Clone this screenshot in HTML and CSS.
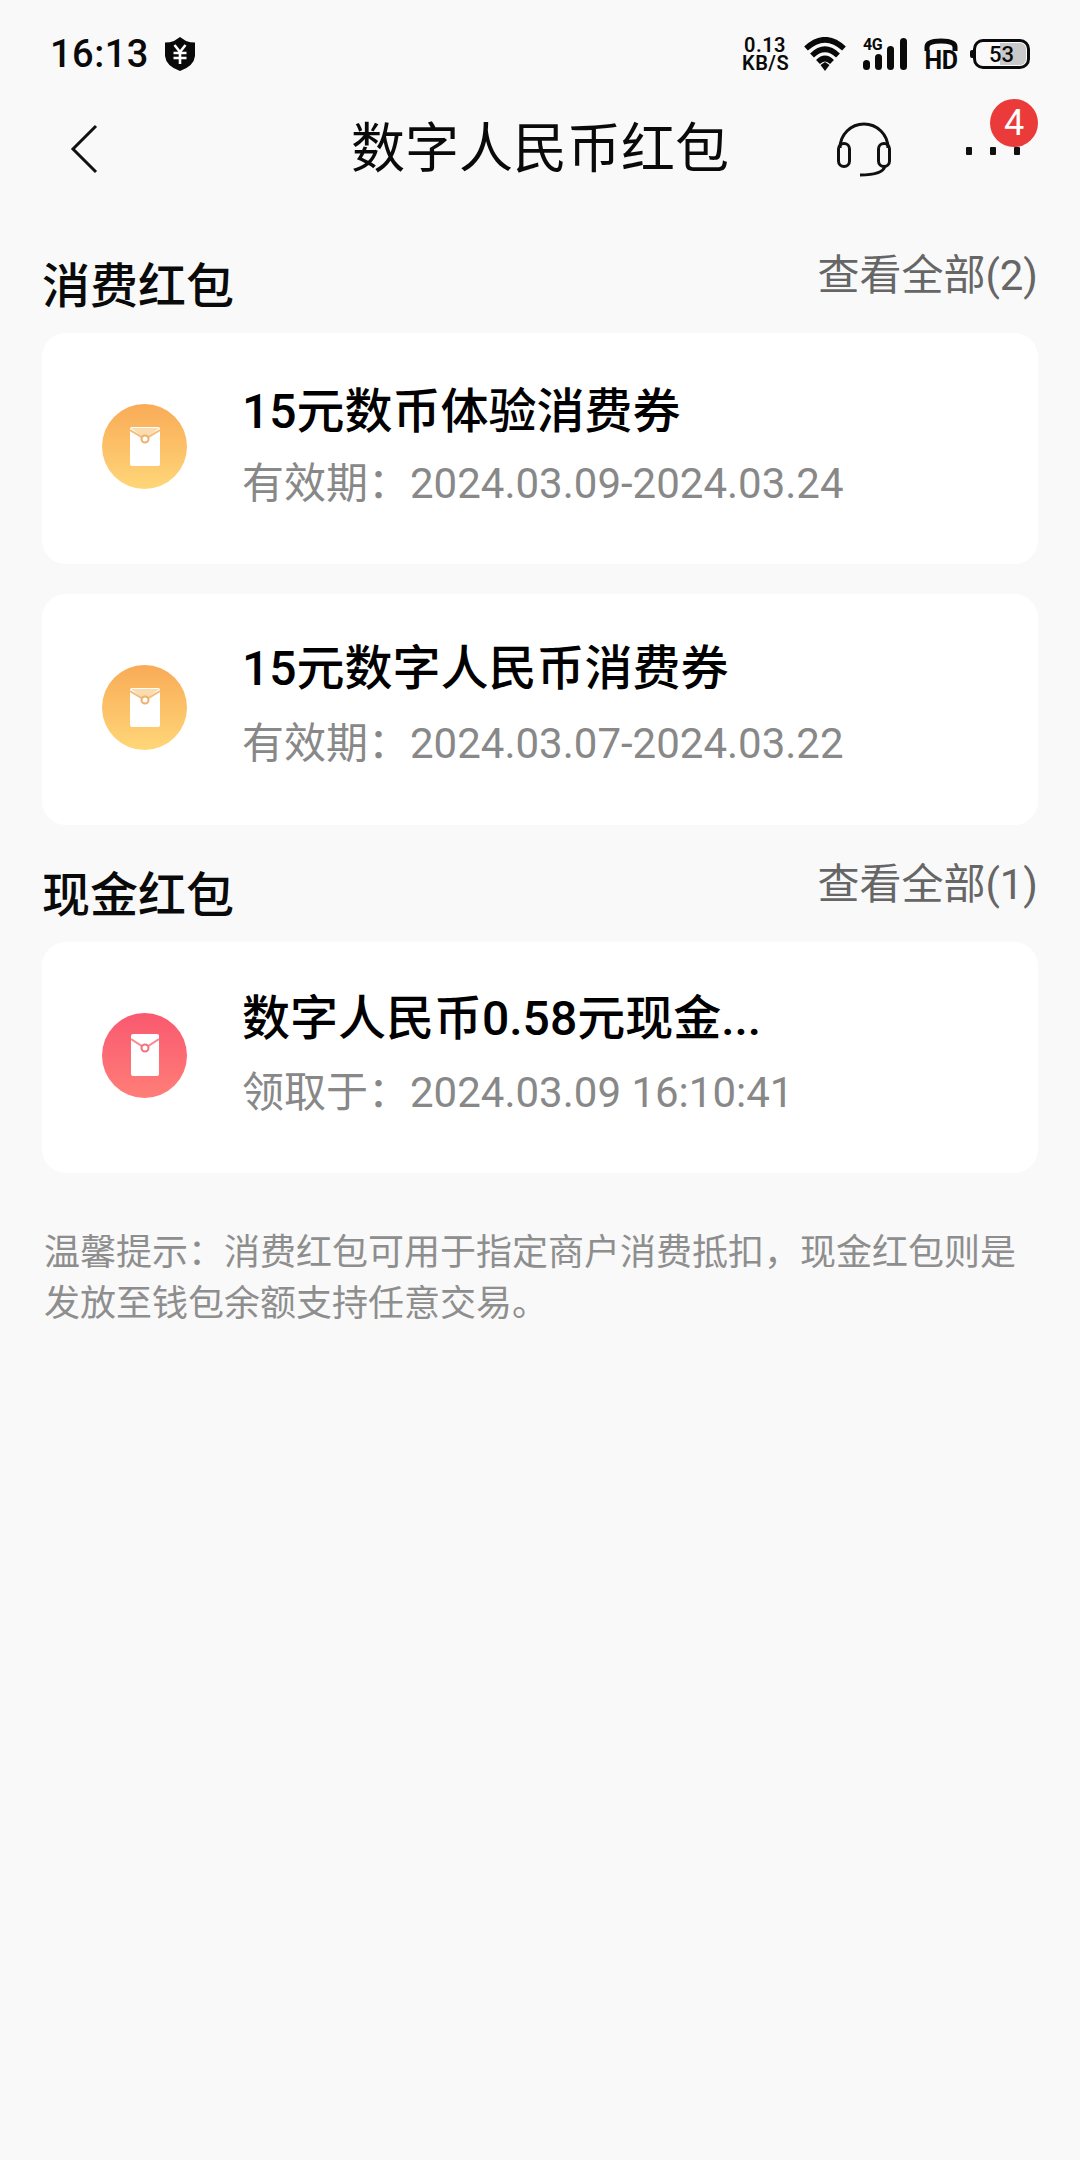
FILE: index.html
```html
<!DOCTYPE html>
<html lang="zh-CN">
<head>
<meta charset="utf-8">
<title>数字人民币红包</title>
<link rel="stylesheet" href="styles.css">
</head>
<body>
<div class="page">
  <div class="status">
    <div class="status-left">
      <span class="time">16:13</span>
      <svg class="shield" viewBox="0 0 30 34"><path d="M15 0 L21 4 Q25 5.500 30 5.500 V19 Q29 29 15 34 Q1 29 0 19 V5.500 Q5 5.500 9 4 Z" fill="#0a0a0a"/><path d="M9.500 8 L15 15 L20.500 8 M8.500 16 H21.500 M8.500 21 H21.500 M15 15 V27" stroke="#fff" stroke-width="2.600" fill="none"/></svg>
    </div>
    <div class="status-right">
      <div class="speed">0.13<br>KB/S</div>
      <svg class="wifi" viewBox="0 0 42 34"><path d="M2 11.500 Q21 -6 40 11.500 M8 18.500 Q21 6 34 18.500 M14 25 Q21 18 28 25" stroke="#0a0a0a" stroke-width="5.500" fill="none"/><path d="M16.500 28 L21 25 L25.500 28 L21 34 Z" fill="#0a0a0a"/></svg>
      <div class="signal">
        <span class="net">4G</span>
        <svg class="bars" viewBox="0 0 44 33"><rect x="0" y="22" width="7" height="10" rx="3.500"/><rect x="12" y="16" width="7" height="16" rx="3.500"/><rect x="24" y="8" width="7" height="24" rx="3.500"/><rect x="37" y="0" width="7" height="32" rx="3.500"/></svg>
      </div>
      <div class="hd">
        <svg class="phone" viewBox="0 0 34 13"><path d="M3 13 V9 Q3 3 17 3 Q31 3 31 9 V13" stroke="#0a0a0a" stroke-width="5" fill="none"/></svg>
        <span class="hd-text">HD</span>
      </div>
      <div class="battery"><span class="battery-fill"></span><span class="battery-num">53</span></div>
    </div>
  </div>

  <div class="nav">
    <svg class="back" viewBox="0 0 28 52"><path d="M26 3 L3 26 L26 49" stroke="#111" stroke-width="3" fill="none"/></svg>
    <h1 class="title">数字人民币红包</h1>
    <svg class="headset" viewBox="0 0 56 56"><g fill="none" stroke="#111" stroke-width="3"><path d="M4 27 A24 24 0 0 1 52 27"/><rect x="2.500" y="22.500" width="11" height="23" rx="5.500"/><rect x="42.500" y="22.500" width="11" height="23" rx="5.500"/><path d="M49 45 Q47 54 24 54"/></g></svg>
    <div class="more">
      <span class="dot"></span><span class="dot"></span><span class="dot"></span>
      <span class="badge">4</span>
    </div>
  </div>

  <section class="group">
    <div class="group-head"><h2>消费红包</h2><a class="all">查看全部(2)</a></div>
    <div class="card">
      <div class="coin coin-gold"><svg class="env" viewBox="0 0 30 39"><rect width="30" height="39" rx="2" fill="#fff"/><path d="M1 1 H29 L15 12 Z" fill="#fbdcae"/><path d="M0 3 L15 12 L30 3" stroke="#f3bd7e" stroke-width="2" fill="none"/><circle cx="15" cy="12" r="3.500" fill="#fff" stroke="#efb069" stroke-width="2"/></svg></div>
      <div class="info info-a"><div class="name">15元数币体验消费券</div><div class="meta">有效期：2024.03.09-2024.03.24</div></div>
    </div>
    <div class="card">
      <div class="coin coin-gold"><svg class="env" viewBox="0 0 30 39"><rect width="30" height="39" rx="2" fill="#fff"/><path d="M1 1 H29 L15 12 Z" fill="#fbdcae"/><path d="M0 3 L15 12 L30 3" stroke="#f3bd7e" stroke-width="2" fill="none"/><circle cx="15" cy="12" r="3.500" fill="#fff" stroke="#efb069" stroke-width="2"/></svg></div>
      <div class="info info-b"><div class="name">15元数字人民币消费券</div><div class="meta">有效期：2024.03.07-2024.03.22</div></div>
    </div>
  </section>

  <section class="group">
    <div class="group-head group-head-next"><h2>现金红包</h2><a class="all">查看全部(1)</a></div>
    <div class="card">
      <div class="coin coin-red"><svg class="env env-tall" viewBox="0 0 28 42"><rect width="28" height="42" rx="2" fill="#fff"/><path d="M0 5 L14 14 L28 5" stroke="#f98a94" stroke-width="2" fill="none"/><circle cx="14" cy="14" r="3.500" fill="#fff" stroke="#f4707f" stroke-width="2"/></svg></div>
      <div class="info info-c"><div class="name">数字人民币0.58元现金...</div><div class="meta">领取于：2024.03.09 16:10:41</div></div>
    </div>
  </section>

  <p class="tip">温馨提示：消费红包可用于指定商户消费抵扣，现金红包则是发放至钱包余额支持任意交易。</p>
</div>
</body>
</html>
```
FILE: styles.css
```css
* { box-sizing: border-box; margin: 0; padding: 0; }
html, body { background: #f9f9f9; }
body {
  width: 1080px;
  height: 2160px;
  overflow: hidden;
  font-family: Roboto, "Noto Sans CJK SC", sans-serif;
  color: #0a0a0a;
}

.status {
  display: flex;
  justify-content: space-between;
  align-items: center;
  height: 110px;
  padding: 0 50px 2px 50px;
}
.status-left { display: flex; align-items: center; gap: 16px; }
.time { font-size: 38px; font-weight: 500; letter-spacing: 0.5px; }
.shield { width: 30px; height: 34px; }
.status-right { display: flex; align-items: center; }
.speed {
  width: 46px;
  font-size: 20px;
  line-height: 18px;
  font-weight: 600;
  letter-spacing: 0.5px;
  text-align: center;
  white-space: nowrap;
}
.wifi { width: 42px; height: 34px; margin-left: 16px; }
.signal { position: relative; width: 44px; height: 33px; margin-left: 17px; }
.net { position: absolute; left: 0; top: 0; font-size: 16px; line-height: 14px; font-weight: 700; letter-spacing: -0.5px; }
.bars { position: absolute; left: 0; top: 0; width: 44px; height: 33px; fill: #0a0a0a; }
.hd { display: flex; flex-direction: column; align-items: center; width: 34px; margin-left: 17px; }
.phone { width: 34px; height: 13px; }
.hd-text { font-size: 25px; line-height: 20px; font-weight: 700; letter-spacing: -0.5px; }
.battery {
  position: relative;
  width: 57px;
  height: 30px;
  margin-left: 15px;
  border: 3px solid #0a0a0a;
  border-radius: 10px;
  display: flex;
  align-items: center;
  justify-content: center;
}
.battery::before {
  content: "";
  position: absolute;
  left: -6px;
  top: 8px;
  width: 3px;
  height: 8px;
  border-radius: 2px 0 0 2px;
  background: #0a0a0a;
}
.battery-fill { position: absolute; right: 1px; top: 1px; bottom: 1px; width: 26px; background: #c9c9c9; border-radius: 0 6px 6px 0; }
.battery-num { position: relative; font-size: 22px; font-weight: 500; }

.nav {
  display: flex;
  align-items: center;
  height: 78px;
  padding-left: 70px;
}
.back { width: 28px; height: 52px; flex: none; }
.title {
  font-size: 54px;
  font-weight: 400;
  line-height: 78px;
  padding-top: 2px;
  margin-left: 253px;
  width: 376px;
  white-space: nowrap;
}
.headset { width: 56px; height: 56px; margin-left: 109px; flex: none; }
.more { position: relative; display: flex; gap: 18px; margin-left: 74px; padding-top: 4px; }
.dot { width: 6px; height: 8px; border-radius: 1px; background: #111; }
.badge {
  position: absolute;
  left: 24px;
  top: -44px;
  width: 48px;
  height: 48px;
  border-radius: 50%;
  background: #ea3a3a;
  color: #fff;
  font-size: 36px;
  line-height: 48px;
  text-align: center;
}

.group { padding: 0 42px; }
.group-head {
  display: flex;
  justify-content: space-between;
  align-items: flex-start;
  height: 87px;
  margin-top: 58px;
}
.group-head-next { margin-top: 0; }
h2 { font-size: 48px; font-weight: 500; line-height: 66px; padding-top: 8px; }
.all { font-size: 42px; color: #666; line-height: 58px; padding-top: 1px; margin-left: -1px; }
.card {
  display: flex;
  align-items: center;
  height: 231px;
  margin-bottom: 30px;
  background: #fff;
  border-radius: 24px;
  padding-left: 60px;
}
.coin {
  width: 85px;
  height: 85px;
  margin-top: -5px;
  border-radius: 50%;
  display: flex;
  align-items: center;
  justify-content: center;
  flex: none;
}
.coin-gold { background: linear-gradient(180deg, #f9ab57, #ffd678); }
.coin-red { background: linear-gradient(180deg, #f9596f, #ff7e78); }
.env { width: 30px; height: 39px; }
.env-tall { width: 28px; height: 42px; }
.info { margin-left: 55px; align-self: flex-start; }
.info-a { padding-top: 46px; }
.info-b { padding-top: 42px; }
.info-c { padding-top: 44px; }
.name { font-size: 48px; font-weight: 500; line-height: 66px; white-space: nowrap; color: #000; }
.meta { font-size: 42px; color: #888; line-height: 60px; white-space: nowrap; }
.info-a .meta { margin-top: 9px; }
.info-b .meta { margin-top: 12px; }
.info-c .meta { margin-top: 11px; }
.tip {
  margin: 55px 44px 0;
  font-size: 36px;
  line-height: 51px;
  color: #8e8e8e;
  width: 990px;
}
```
